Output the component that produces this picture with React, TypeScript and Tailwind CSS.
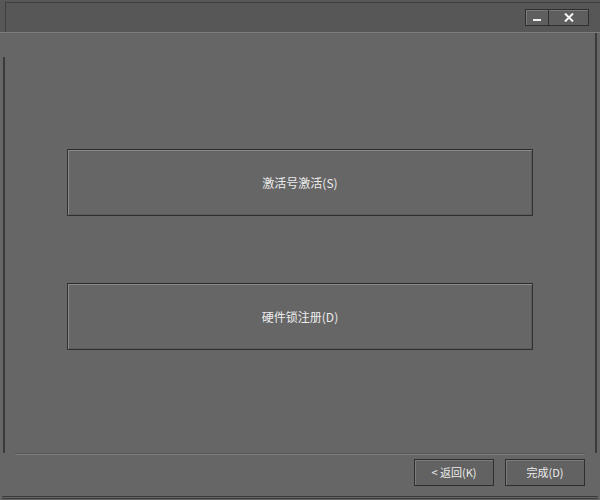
const font = { fontFamily: '"Microsoft YaHei", "Noto Sans CJK SC", "Liberation Sans", sans-serif' };

function BigButton({ label }: { label: string }) {
    return (
        <button className="h-[67px] w-[466px] border border-[#303030] border-t-[#2c2c2c] bg-[#666666] text-[12px] text-[#ececec] shadow-[inset_1px_1px_0_#8a8a8a,inset_-1px_-1px_0_#5a5a5a]">
            {label}
        </button>
    );
}

function SmallButton({ label }: { label: string }) {
    return (
        <button className="h-[27px] w-[80px] border border-[#2e2e2e] bg-[#626262] text-[11px] text-[#ececec] shadow-[inset_1px_1px_0_#7c7c7c]">
            {label}
        </button>
    );
}

export default function App() {
    return (
        <div className="flex h-[500px] w-[600px] flex-col bg-[#666666]" style={font}>
            {/* title bar */}
            <div className="flex h-[33px] shrink-0 items-start justify-end border-b border-[#7d7d7d] bg-[#575757] pt-[2px]">
                <div className="flex h-[30px] flex-1 items-start justify-end border-t border-l border-[#3e3e3e] pr-[11px] pt-[6px] ml-[5px]">
                    <div className="flex h-[17px] border border-[#2f2f2f] bg-[#5e5e5e] shadow-[inset_1px_1px_0_#7a7a7a]">
                        <div className="flex w-[23px] items-center justify-center border-r border-[#2f2f2f]">
                            <div className="mt-[5px] h-[2px] w-[8px] bg-[#f0f0f0]" />
                        </div>
                        <div className="flex w-[39px] items-center justify-center">
                            <svg width="10" height="9" viewBox="0 0 10 9">
                                <path d="M1 0.5 L9 8.5 M9 0.5 L1 8.5" stroke="#f5f5f5" strokeWidth="2" />
                            </svg>
                        </div>
                    </div>
                </div>
            </div>

            {/* body */}
            <div className="flex flex-1 flex-col">
                <div className="flex flex-1">
                    <div className="mt-[24px] w-[3px] shrink-0 border-r-[2px] border-[#3a3a3a] ml-[2px]" />
                    <div className="flex flex-1 flex-col items-center gap-[67px] pt-[116px]">
                        <BigButton label="激活号激活(S)" />
                        <BigButton label="硬件锁注册(D)" />
                    </div>
                    <div className="w-[2px] shrink-0 bg-[#3a3a3a] mr-[3px]" />
                </div>

                {/* footer */}
                <div className="flex flex-col px-[15px] pr-[15px]">
                    <div className="h-[2px] border-t border-[#575757] border-b-[#7e7e7e] border-b" />
                    <div className="flex justify-end gap-[11px] pt-[4px] pb-[10px]">
                        <SmallButton label="< 返回(K)" />
                        <SmallButton label="完成(D)" />
                    </div>
                </div>
                <div className="mx-[2px] mb-[1px] h-[3px] border-t border-b border-[#3a3a3a]" />
            </div>
        </div>
    );
}
